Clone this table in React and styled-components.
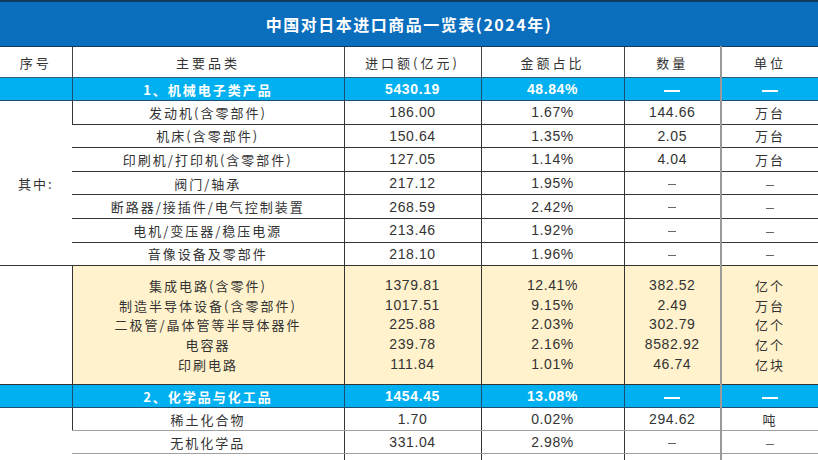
import React from "react";
import styled, { createGlobalStyle } from "styled-components";

const Global = createGlobalStyle`
  html, body { margin: 0; padding: 0; background: #fff; }
  body { font-family: "Noto Sans CJK SC", sans-serif; color: #333; overflow: hidden; }
`;

const Table = styled.table`
  width: 818px;
  border-collapse: collapse;
  table-layout: fixed;
  font-size: 13px;
`;

const TitleCell = styled.th`
  height: 44px;
  padding: 0;
  background: #0a6ebd;
  color: #fff;
  font-size: 16px;
  font-weight: 700;
  letter-spacing: 1.5px;
  border-top: 2px solid #123a5e;
  border-bottom: 1px solid #123a5e;
  text-align: center;
`;

const HeadCell = styled.th`
  height: 30px;
  padding: 0;
  font-weight: 400;
  letter-spacing: 3px;
  color: #333;
  border-left: ${(p) => (p.$soft ? "2px solid #9a9a9a" : "1px solid #444")};
  border-bottom: 1px solid #2b5c80;
  &:first-child { border-left: none; }
`;

const Row = styled.tr`
  background: ${(p) => p.$bg || "#fff"};
`;

const Cell = styled.td`
  height: ${(p) => p.$h || 22}px;
  padding: 0;
  text-align: center;
  vertical-align: middle;
  border-left: ${(p) => (p.$soft ? "2px solid #9a9a9a" : "1px solid #333")};
  border-bottom: 1px solid ${(p) => p.$line || "#333"};
  background: ${(p) => p.$bg || "transparent"};
  letter-spacing: ${(p) => (p.$num ? "0.6px" : "2px")};
  font-family: ${(p) =>
    p.$num ? '"Liberation Sans", "Noto Sans CJK SC", sans-serif' : '"Noto Sans CJK SC", sans-serif'};
  font-size: ${(p) => (p.$num ? "14px" : "13px")};
  color: ${(p) => (p.$dash ? "#777" : "#333")};
  &:first-child { border-left: none; }
`;

const CatCell = styled.td`
  height: 22px;
  padding: 0;
  text-align: center;
  background: #00b0f0;
  color: #fff;
  font-weight: 700;
  font-size: ${(p) => (p.$num ? "14px" : "13px")};
  letter-spacing: ${(p) => (p.$num ? "0.6px" : "2px")};
  font-family: ${(p) =>
    p.$num ? '"Liberation Sans", "Noto Sans CJK SC", sans-serif' : '"Noto Sans CJK SC", sans-serif'};
  border-left: ${(p) => (p.$soft ? "2px solid #9a9a9a" : "1px solid #1d4f73")};
  border-top: 1px solid #1d4f73;
  border-bottom: 1px solid #1d4f73;
  &:first-child { border-left: none; }
`;

const Lines = styled.div`
  display: flex;
  flex-direction: column;
  line-height: 19.6px;
`;

const Dash = styled.span`
  display: inline-block;
  width: 16px;
  height: 2px;
  background: #fff;
  vertical-align: middle;
`;

const Small = styled.span`
  display: inline-block;
  width: 8px;
  height: 1px;
  background: #666;
  vertical-align: middle;
`;

const sub1 = [
  ["发动机(含零部件)", "186.00", "1.67%", "144.66", "万台"],
  ["机床(含零部件)", "150.64", "1.35%", "2.05", "万台"],
  ["印刷机/打印机(含零部件)", "127.05", "1.14%", "4.04", "万台"],
  ["阀门/轴承", "217.12", "1.95%", null, null],
  ["断路器/接插件/电气控制装置", "268.59", "2.42%", null, null],
  ["电机/变压器/稳压电源", "213.46", "1.92%", null, null],
  ["音像设备及零部件", "218.10", "1.96%", null, null],
];

const block = [
  ["集成电路(含零件)", "1379.81", "12.41%", "382.52", "亿个"],
  ["制造半导体设备(含零部件)", "1017.51", "9.15%", "2.49", "万台"],
  ["二极管/晶体管等半导体器件", "225.88", "2.03%", "302.79", "亿个"],
  ["电容器", "239.78", "2.16%", "8582.92", "亿个"],
  ["印刷电路", "111.84", "1.01%", "46.74", "亿块"],
];

const sub2 = [
  ["稀土化合物", "1.70", "0.02%", "294.62", "吨"],
  ["无机化学品", "331.04", "2.98%", null, null],
  ["", "", "", "", ""],
];

const Category = ({ name, amount, share }) => (
  <tr>
    <CatCell />
    <CatCell>{name}</CatCell>
    <CatCell $num>{amount}</CatCell>
    <CatCell $num>{share}</CatCell>
    <CatCell><Dash /></CatCell>
    <CatCell $soft><Dash /></CatCell>
  </tr>
);

const ItemRow = ({ item, first, label, span, line, h }) => (
  <Row>
    {first && (
      <Cell rowSpan={span} $line={line}>
        {label}
      </Cell>
    )}
    <Cell $line={line} $h={h}>{item[0]}</Cell>
    <Cell $num $line={line}>{item[1]}</Cell>
    <Cell $num $line={line}>{item[2]}</Cell>
    <Cell $num $line={line} $dash={!item[3]}>
      {item[3] === null ? <Small /> : item[3]}
    </Cell>
    <Cell $soft $line={line} $dash={!item[4]}>
      {item[4] === null ? <Small /> : item[4]}
    </Cell>
  </Row>
);

export default function App() {
  return (
    <>
      <Global />
      <Table>
        <colgroup>
          <col style={{ width: 72 }} />
          <col style={{ width: 272 }} />
          <col style={{ width: 137 }} />
          <col style={{ width: 143 }} />
          <col style={{ width: 97 }} />
          <col style={{ width: 97 }} />
        </colgroup>
        <thead>
          <tr>
            <TitleCell colSpan={6}>中国对日本进口商品一览表(2024年)</TitleCell>
          </tr>
          <tr>
            <HeadCell>序号</HeadCell>
            <HeadCell>主要品类</HeadCell>
            <HeadCell>进口额(亿元)</HeadCell>
            <HeadCell>金额占比</HeadCell>
            <HeadCell>数量</HeadCell>
            <HeadCell $soft>单位</HeadCell>
          </tr>
        </thead>
        <tbody>
          <Category name="1、机械电子类产品" amount="5430.19" share="48.84%" />
          {sub1.map((it, i) => (
            <ItemRow key={i} item={it} first={i === 0} span={7} label="其中:" h={22.6} />
          ))}
          <Row>
            <Cell $h={118} />
            {[0, 1, 2, 3, 4].map((c) => (
              <Cell key={c} $bg="#fff2cc" $num={c > 0 && c < 4} $soft={c === 4}>
                <Lines>
                  {block.map((b, i) => (
                    <span key={i}>{b[c]}</span>
                  ))}
                </Lines>
              </Cell>
            ))}
          </Row>
          <Category name="2、化学品与化工品" amount="1454.45" share="13.08%" />
          {sub2.map((it, i) => (
            <ItemRow key={i} item={it} first={i === 0} span={3} label="" line="#a0a0a0" h={22} />
          ))}
        </tbody>
      </Table>
    </>
  );
}
